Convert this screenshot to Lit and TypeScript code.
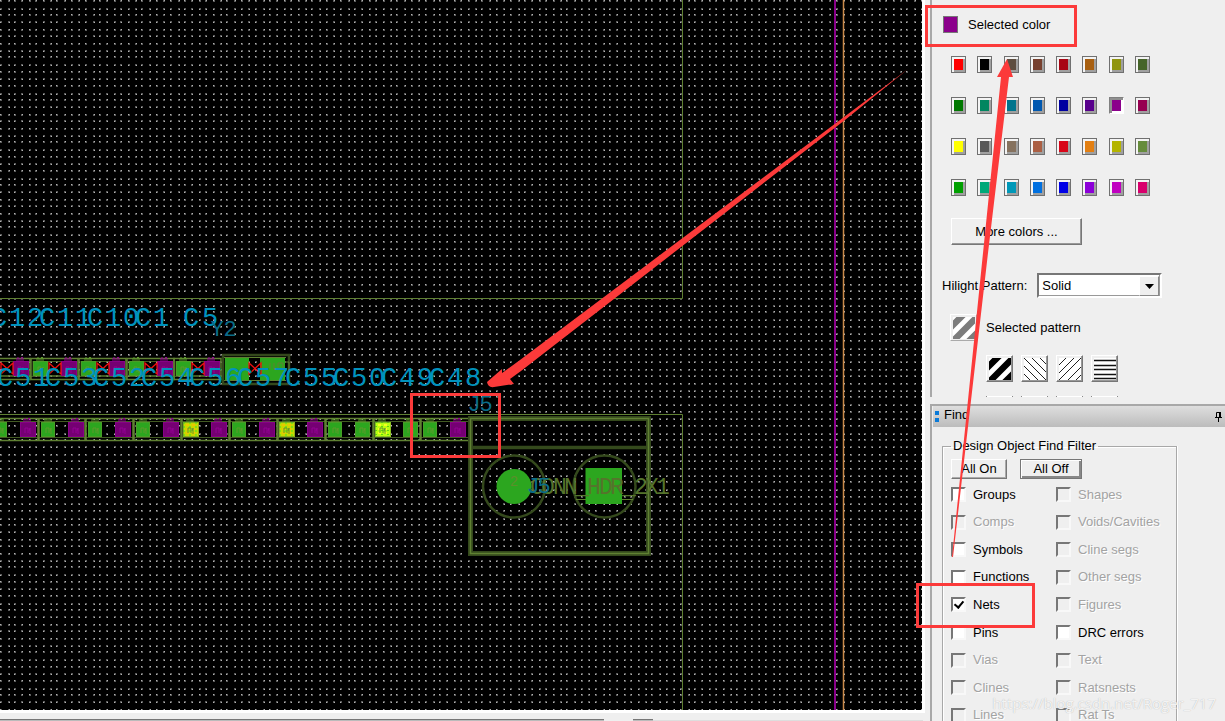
import { LitElement, html, svg, css } from "lit";
import { customElement, state } from "lit/decorators.js";

const COLORS = [
  "#ff0000", "#000000", "#5e4e40", "#77402f", "#a80614", "#a85f10", "#90940f", "#466429",
  "#007800", "#008660", "#00748c", "#0058b0", "#0000a0", "#58008c", "#8b008b", "#960050",
  "#ffff00", "#585858", "#86725e", "#ab5f43", "#d80618", "#e37f12", "#b4b400", "#668c3c",
  "#00a000", "#00a878", "#0098b8", "#0070e0", "#0000e6", "#8c00d8", "#c000c0", "#d8006c",
];
const SELECTED = 14;

type Item = { label: string; on?: boolean; checked?: boolean };
const FILTERS: Item[] = [
  { label: "Groups", on: true }, { label: "Shapes" },
  { label: "Comps" }, { label: "Voids/Cavities" },
  { label: "Symbols", on: true }, { label: "Cline segs" },
  { label: "Functions", on: true }, { label: "Other segs" },
  { label: "Nets", on: true, checked: true }, { label: "Figures" },
  { label: "Pins", on: true }, { label: "DRC errors", on: true },
  { label: "Vias" }, { label: "Text" },
  { label: "Clines" }, { label: "Ratsnests" },
  { label: "Lines" }, { label: "Rat Ts" },
];

const OLIVE = "#5f8032";
const DARK = "#34491c";
const GREEN = "#2ca61f";
const PURPLE = "#750073";

/* Snapped grid points: twelve per 85px tile. */
const STEPS = [0, 8, 14, 21, 29, 35, 43, 50, 56, 64, 71, 78];

@customElement("pcb-board")
export class PcbBoard extends LitElement {
  static styles = css`
    :host { display: block; background: #000; overflow: hidden; }
    .canvas { display: block; width: 100%; height: 100%; }
    .refdes { font: 27px "Liberation Mono", monospace; fill: #0092bd; text-anchor: middle; }
    .name { font: 22px "Liberation Mono", monospace; fill: #0a6c88; text-anchor: middle; }
    .part { font: 23px "Liberation Mono", monospace; fill: #55742c; text-anchor: middle; }
    .pin { font: 14px "Liberation Mono", monospace; fill: #5b8f2c; text-anchor: middle; }
  `;

  private glyphs(text: string, xs: number[], y: number, cls: string) {
    return svg`<text class=${cls} x=${xs.join(" ")} y=${y}>${text}</text>`;
  }

  private pad(x: number, y: number, w: number, fill: string) {
    const line = fill === PURPLE ? "#930093" : "#5c9a2c";
    return svg`
      <rect x=${x} y=${y} width=${w} height="15" fill=${fill}></rect>
      <rect x=${x + 0.5} y=${y + 0.5} width=${w - 1} height="14" fill="none" stroke=${line} opacity=".6"></rect>
      <path d="M${x + 4} ${y}v-3h2v3m2 0v-3l1 -1l1 1v3M${x + 5} ${y + 11}v-5h3v5M${x + 10} ${y + 12}v-6l-1 3"
        fill="none" stroke=${line} stroke-width="1"></path>`;
  }

  private bow(x: number) {
    return svg`<path d="M${x} 363v11l12 -11v11z" fill="none" stroke="#f01010" stroke-width="1.3"></path>`;
  }

  render() {
    const top = [-17, 31, 79, 127, 174];
    const bottom: [number, string, string][] = [
      [-10, GREEN, PURPLE], [38, GREEN, PURPLE], [85, GREEN, PURPLE], [133, GREEN, PURPLE],
      [181, "url(#gold)", PURPLE], [229, GREEN, PURPLE], [277, "url(#gold)", PURPLE],
      [325, GREEN, GREEN], [373, "url(#lime)", GREEN], [420, GREEN, PURPLE],
    ];
    const xs = (start: number, n: number) =>
      Array.from({ length: n }, (_, i) => start + Math.floor(i / 3) * 48 + [0, 18, 36][i % 3]);
    return html`
      <svg class="canvas" role="img" aria-label="Board layout">
        <defs>
          <pattern id="dots" width="85" height="85" patternUnits="userSpaceOnUse">
            ${STEPS.map((y, j) => STEPS.map((x, i) => svg`
              <rect x=${x} y=${y} width="2" height="2" fill="#5c5c5c"></rect>
              <rect x=${x + (i % 2)} y=${y + (j % 2)} width="1" height="1" fill="#b4b4b4"></rect>`))}
          </pattern>
          <pattern id="gold" width="6" height="4" patternUnits="userSpaceOnUse">
            <rect width="6" height="4" fill="#c8d800"></rect>
            <rect width="3" height="2" fill="#e8c800"></rect><rect x="3" y="2" width="2" height="2" fill="#80e010"></rect>
          </pattern>
          <pattern id="lime" width="6" height="4" patternUnits="userSpaceOnUse">
            <rect width="6" height="4" fill="#b8ff10"></rect>
            <rect width="3" height="2" fill="#f4ff20"></rect><rect x="3" y="2" width="2" height="1" fill="#60d010"></rect>
          </pattern>
        </defs>
        <rect width="100%" height="100%" fill="url(#dots)"></rect>
        <g fill="none" stroke=${OLIVE}>
          <path d="M0 298.500H682.500V0"></path>
          <path d="M0 414.500H682.500V900"></path>
        </g>
        <path d="M835 0V900" stroke="#8b008b" stroke-width="2"></path>
        <path d="M843.500 0V900" stroke="#c8894a" stroke-width="1.500"></path>

        ${this.glyphs("C12C11C10C1", xs(-1, 11), 326, "refdes")}
        ${this.glyphs("C5", [191, 210], 326, "refdes")}
        ${this.glyphs("Y2", [217, 230], 336, "name")}

        ${top.map((x) => svg`
          <rect x=${x} y="358.500" width="47" height="21" fill="none" stroke=${OLIVE} stroke-width="1.500"></rect>
          <rect x=${x + 2} y="361.500" width="43" height="14" fill="none" stroke=${OLIVE} opacity=".7"></rect>
          ${this.pad(x + 2, 361, 15, GREEN)}
          ${this.pad(x + 30, 361, 16, PURPLE)}
          ${this.bow(x + 18)}`)}
        <path d="M0 376.500H222" stroke=${OLIVE} opacity=".7"></path>
        <rect x="223" y="355" width="66" height="29" fill="none" stroke=${DARK} stroke-width="2.500"></rect>
        <rect x="225" y="357" width="24" height="23" fill=${GREEN}></rect>
        <rect x="260" y="357" width="25" height="23" fill=${GREEN}></rect>
        <path d="M224 357.500H286M224 380.500H286" stroke=${OLIVE}></path>
        <path d="M285 362h4v8h4M270 363v6M274 363v6h4v-6h5v6" fill="none" stroke=${OLIVE}></path>
        ${this.bow(249)}
        ${this.glyphs("C51C53C52C54C56C57C55C50C49C48", xs(5, 30), 386, "refdes")}
        ${this.glyphs("J5", [474, 486], 411, "name")}

        <path d="M0 418.500H470M0 440.500H470" stroke=${OLIVE} stroke-width="1.500"></path>
        <path d="M0 421.500H470M0 437.500H470" stroke=${OLIVE} opacity=".7"></path>
        ${bottom.map(([x, a, b]) => svg`
          <path d="M${x + 0.5} 419v21" stroke=${OLIVE} stroke-width="2.500"></path>
          ${this.pad(x + (a[0] === "u" ? 2 : 3), 422, a[0] === "u" ? 16 : 14, a)}
          ${this.pad(x + 30, 422, b === GREEN ? 15 : 16, b)}`)}

        <g fill="none">
          <rect x="470.500" y="418.500" width="178" height="135" stroke=${DARK} stroke-width="5"></rect>
          <path d="M470 447.500H648" stroke=${DARK} stroke-width="3.500"></path>
          <rect x="470.500" y="418.500" width="178" height="135" stroke=${OLIVE} stroke-width="1.500"></rect>
          <circle cx="514" cy="486.500" r="31" stroke=${DARK} stroke-width="2.500"></circle>
          <circle cx="604.500" cy="486.500" r="31" stroke=${DARK} stroke-width="2.500"></circle>
          <path d="M576 499.500H633" stroke=${OLIVE}></path>
        </g>
        <circle cx="514" cy="486.500" r="17.500" fill=${GREEN}></circle>
        <rect x="585.500" y="468" width="36.500" height="36" fill=${GREEN}></rect>
        ${this.glyphs("CONN_HDR_2X1", [537, 548, 560, 571, 582, 594, 606, 617, 629, 641, 652, 663], 494, "part")}
        ${this.glyphs("2", [514], 486, "pin")}
        ${this.glyphs("J5", [533, 544], 493, "name")}
      </svg>`;
  }
}

const STRIPES: Record<string, string> = {
  thick: "M-3 11L11 -3M-3 27L27 -3M13 27L27 13",
  back: "M0 16L7 23M0 8L15 23M0 0L23 23M8 0L23 15M16 0L23 7",
  fwd: "M0 7L7 0M0 15L15 0M0 22L22 0M8 23L23 8M16 23L23 16",
  rows: "M0 2.500H22M0 7.500H22M0 11.500H22M0 16.500H22M0 20.500H22",
};

@customElement("color-panel")
export class ColorPanel extends LitElement {
  static styles = css`
    :host { display: block; border-left: 2px solid #a8a8a8; padding: 15px 0 0 11px; }
    .current { display: flex; align-items: center; gap: 10px; height: 18px; }
    .title { padding-top: 2px; }
    .swatch { width: 15px; height: 17px; box-sizing: border-box; border: 1px solid #777; }
    .grid { display: grid; grid-template-columns: repeat(8, 15px); justify-content: space-between; width: 199px; row-gap: 24px; margin: 23px 0 0 8px; }
    .chip { width: 15px; height: 17px; padding: 0; border: 1px solid #707070; box-sizing: border-box; box-shadow: inset 2px 2px #f4f4f4, inset -2px -2px #a0a0a0; display: grid; place-items: center; background: #ccc; }
    .chip.picked { border-color: #808080 #fff #fff #808080; box-shadow: inset 2px 2px #909090, inset -2px -2px #fff; }
    .ink { display: block; width: 9px; height: 11px; }
    .btn { font: inherit; color: #000; background: #efefef; border: 1px solid; border-color: #fff #777 #777 #fff; box-shadow: inset -1px -1px #999; padding: 0; }
    .more { display: block; width: 131px; height: 27px; margin: 22px 0 0 8px; }
    .row { display: flex; align-items: center; gap: 10px; margin-top: 28px; height: 25px; margin-left: -1px; }
    .combo { position: relative; }
    .select { font: inherit; appearance: none; width: 125px; height: 25px; border: 2px solid; border-color: #777 #fff #fff #777; border-radius: 0; background: #fff; color: #000; padding: 0 3px; display: block; box-shadow: inset -1px -1px #999; }
    .drop { position: absolute; right: 3px; top: 3px; width: 18px; height: 18px; background: #efefef; border: 1px solid; border-color: #fff #888 #888 #fff; display: grid; place-items: center; pointer-events: none; }
    .sample { display: flex; align-items: center; gap: 9px; margin: 16px 0 0 7px; }
    .tile { width: 27px; height: 27px; box-sizing: border-box; padding: 0; display: grid; place-items: center; overflow: hidden; }
    .flat { border: 1px solid; border-color: #fff #aaa #aaa #fff; }
    .tiles { display: flex; gap: 8px; margin: 14px 0 0 43px; }
    .next { display: flex; gap: 8px; margin: 14px 0 0 43px; }
    .edge { width: 25px; height: 1px; border: 0 solid; border-width: 0 1px; border-color: #fff #888; background: #fff; }
  `;

  @state() private picked = SELECTED;

  private pattern(kind: string, color: string, width: number) {
    return html`<svg width="22" height="22" viewBox="0 0 22 22">
      <rect width="22" height="22" fill="#fff"></rect>
      <path d=${STRIPES[kind]} stroke=${color} stroke-width=${width} fill="none"></path>
    </svg>`;
  }

  render() {
    return html`
      <div class="current">
        <span class="swatch" style="background:${COLORS[this.picked]}"></span><span class="title">Selected color</span>
      </div>
      <div class="grid">
        ${COLORS.map((c, i) => html`
          <button class="chip ${i === this.picked ? "picked" : ""}" aria-label="Color ${c}" @click=${() => (this.picked = i)}>
            <span class="ink" style="background:${c}"></span>
          </button>`)}
      </div>
      <button class="btn more">More colors ...</button>
      <div class="row">
        <label for="hilight">Hilight Pattern:</label>
        <div class="combo">
          <select class="select" id="hilight"><option>Solid</option></select>
          <span class="drop"><svg width="9" height="5"><path d="M0 0H9L4.500 5z"></path></svg></span>
        </div>
      </div>
      <div class="sample">
        <span class="tile flat">${this.pattern("thick", "#7c7c7c", 6.5)}</span><span>Selected pattern</span>
      </div>
      <div class="tiles">
        <button class="btn tile" aria-label="Thick diagonal">${this.pattern("thick", "#000", 6.5)}</button>
        <button class="btn tile" aria-label="Back diagonal">${this.pattern("back", "#222", 1)}</button>
        <button class="btn tile" aria-label="Forward diagonal">${this.pattern("fwd", "#222", 1)}</button>
        <button class="btn tile" aria-label="Horizontal">${this.pattern("rows", "#111", 1.4)}</button>
      </div>
      <div class="next">
        <span class="edge"></span><span class="edge"></span><span class="edge"></span><span class="edge"></span>
      </div>`;
  }
}

@customElement("find-panel")
export class FindPanel extends LitElement {
  static styles = css`
    :host { display: block; border: solid #a8a8a8; border-width: 2px 0 0 2px; }
    .bar { display: flex; align-items: center; gap: 5px; height: 21px; padding: 0 2px 0 2px; margin-left: 1px; background: linear-gradient(#dedede, #bcbcbc); }
    .title { flex: 1; line-height: 18px; align-self: flex-start; }
    .filter { margin: 10px 0 0 10px; padding: 0 0 0 8px; width: 225px; border: 1px solid #a8a8a8; box-shadow: 1px 0 #fff, inset 1px 1px #fff; min-width: 0; }
    .legend { padding: 0 2px; line-height: 18px; }
    .actions { display: flex; gap: 13px; margin-top: 4px; }
    .btn { font: inherit; line-height: 16px; height: 20px; width: 56px; padding: 0; color: #000; background: #efefef; border: 1px solid; border-color: #fff #777 #777 #fff; box-shadow: inset -1px -1px #aaa; }
    .btn.off { width: 62px; border-color: #777; box-shadow: inset 1px 1px #fff, inset -2px -2px #888; }
    .list { display: grid; grid-template-columns: 105px 1fr; grid-template-rows: repeat(9, 1fr); height: 248px; margin-top: 2px; }
    .item { display: flex; align-items: center; gap: 7px; white-space: nowrap; }
    .item.dim { color: #a3a3a3; text-shadow: 1px 1px #fff; }
    .box { appearance: none; margin: 0; flex: none; width: 15px; height: 15px; border: 2px solid; border-color: #777 #f8f8f8 #f8f8f8 #777; background: #fff; display: grid; place-items: center; }
    .box:disabled { background: #efefef; }
    .box:checked::before { content: ""; width: 4px; height: 7px; border: solid #000; border-width: 0 2px 2px 0; transform: rotate(40deg); margin-bottom: 2px; }
  `;

  render() {
    return html`
      <div class="bar">
        <svg width="4" height="11" aria-hidden="true"><path d="M0 0h4v4h-4zM0 7h4v4h-4z" fill="#0a7ad8"></path></svg>
        <span class="title">Find</span>
        <svg width="9" height="11" aria-hidden="true"><path d="M2.500 6V1.500H6V6M1 6.500H8M4.500 7V11" fill="none" stroke="#000"></path><path d="M5 1h2v5h-2z"></path></svg>
      </div>
      <fieldset class="filter">
        <legend class="legend">Design Object Find Filter</legend>
        <div class="actions"><button class="btn">All On</button><button class="btn off">All Off</button></div>
        <div class="list">
          ${FILTERS.map((f) => html`
            <label class="item ${f.on ? "" : "dim"}">
              <input class="box" type="checkbox" .checked=${!!f.checked} ?disabled=${!f.on}>${f.label}
            </label>`)}
        </div>
      </fieldset>`;
  }
}

@customElement("app-root")
export class AppRoot extends LitElement {
  static styles = css`
    :host { display: flex; position: relative; height: 100vh; overflow: hidden; background: #efefef; color: #000; font: 13px/18px "Liberation Sans", Arial, sans-serif; }
    .work { flex: 1; min-width: 0; display: flex; flex-direction: column; }
    .board { flex: 1; min-height: 0; border-right: 3px solid #fff; border-bottom: 3px solid #fff; }
    .status { display: flex; align-items: flex-end; height: 8px; padding-right: 2px; }
    .cell { height: 1px; border-top: 1px solid #777; background: #bbb; }
    .wide { flex: 1; }
    .stub { width: 20px; margin-left: 29px; }
    .rest { width: 270px; height: 1px; background: #ddd; }
    .side { width: 295px; margin-left: 5px; display: flex; flex-direction: column; gap: 7px; }
    .marks { position: absolute; inset: 0; width: 100%; height: 100%; pointer-events: none; }
    .credit { position: absolute; right: 9px; bottom: 8px; font: 15px/20px "Open Sans", sans-serif; color: rgba(255, 255, 255, 0.85); text-shadow: 0 0 1px #aaa; }
  `;

  render() {
    return html`
      <main class="work">
        <pcb-board class="board"></pcb-board>
        <div class="status"><span class="cell wide"></span><span class="cell stub"></span><span class="rest"></span></div>
      </main>
      <aside class="side">
        <color-panel></color-panel>
        <find-panel></find-panel>
      </aside>
      <svg class="marks" aria-hidden="true">
        <g fill="none" stroke="#fc3a3a" stroke-width="3">
          <rect x="926.500" y="6.500" width="149" height="39"></rect>
          <rect x="411.500" y="394.500" width="88" height="62"></rect>
          <rect x="917.500" y="584.500" width="116" height="42"></rect>
        </g>
        <g fill="#fc3a3a">
          <path d="M908 69L520 360L502 373V369L487 382Q488 388 494 387L514 384L510 379L521 371L845 120Z"></path>
          <path d="M952 557L983 253L1001 77H997L1007 59L1013 77L1009 77L988 253L953 557Z"></path>
        </g>
      </svg>
      <span class="credit">https://blog.csdn.net/Roger_717</span>`;
  }
}
